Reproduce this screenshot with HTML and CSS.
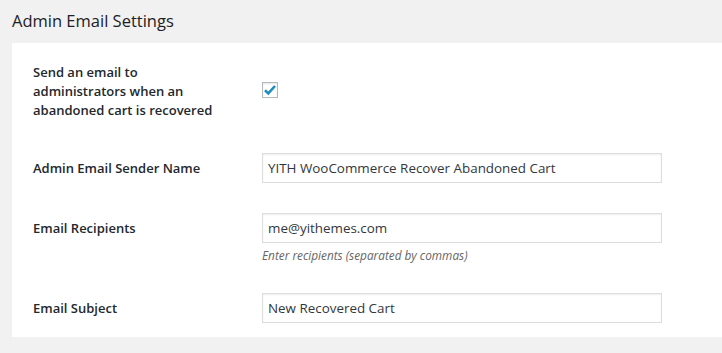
FILE: index.html
```
<!DOCTYPE html>
<html>
<head>
    <meta charset="UTF-8">
    <meta name="viewport" content="width=device-width, initial-scale=1.0">
    <title>Admin Email Settings</title>
    <link rel="stylesheet" href="styles.css">
</head>
<body>
    <h2 class="section-title">Admin Email Settings</h2>
    <div class="panel">
        <div class="row row-check">
            <div class="label">Send an email to administrators when an abandoned cart is recovered</div>
            <div class="field">
                <span class="checkbox">
                    <svg width="14" height="14" viewBox="0 0 14 14">
                        <path d="M2 7.2 L5.3 10.4 L12 3" fill="none" stroke="#1e8cbe" stroke-width="2.6" stroke-linecap="butt" stroke-linejoin="miter"/>
                    </svg>
                </span>
            </div>
        </div>
        <div class="row row-first">
            <div class="label">Admin Email Sender Name</div>
            <div class="field">
                <input type="text" value="YITH WooCommerce Recover Abandoned Cart">
            </div>
        </div>
        <div class="row">
            <div class="label">Email Recipients</div>
            <div class="field">
                <input type="text" value="me@yithemes.com">
                <p class="description">Enter recipients (separated by commas)</p>
            </div>
        </div>
        <div class="row row-last">
            <div class="label">Email Subject</div>
            <div class="field">
                <input type="text" value="New Recovered Cart">
            </div>
        </div>
    </div>
</body>
</html>
```
FILE: styles.css
```
body {
    margin: 0;
    background-color: #f1f1f1;
    font-family: "Open Sans", "Noto Sans", sans-serif;
    color: #23282d;
}

.section-title {
    margin: 0;
    padding: 9px 0 0 12px;
    height: 34px;
    font-size: 16.5px;
    font-weight: 400;
    line-height: 24px;
    color: #1d2125;
}

.panel {
    background-color: #fff;
    margin-left: 12px;
    padding: 20px 21px 14px;
}

.row {
    display: flex;
    align-items: flex-start;
    margin-top: 30px;
}

.row-check {
    margin-top: 0;
}

.row-first {
    margin-top: 33px;
}

.row-last {
    margin-top: 28px;
}

.label {
    width: 229px;
    flex-shrink: 0;
    font-size: 13px;
    font-weight: 600;
    line-height: 19px;
    margin-top: 6px;
}

.row-check .label {
    margin-top: 0;
    width: 190px;
    margin-right: 39px;
}

.row-check .field {
    padding-top: 19px;
}

.checkbox {
    display: flex;
    align-items: center;
    justify-content: center;
    width: 14px;
    height: 14px;
    border: 1px solid #b4b9be;
    box-shadow: inset 0 1px 2px rgba(0, 0, 0, .1);
    background: #fff;
}

input[type="text"] {
    box-sizing: border-box;
    display: block;
    width: 400px;
    height: 30px;
    margin: 0;
    padding: 0 5px;
    border: 1px solid #ddd;
    box-shadow: inset 0 1px 2px rgba(0, 0, 0, .07);
    font-family: "Open Sans", "Noto Sans", sans-serif;
    font-size: 13.4px;
    color: #32373c;
    background: #fff;
    outline: none;
}

.description {
    margin: 3px 0 0;
    font-size: 11.8px;
    font-style: italic;
    line-height: 19px;
    color: #666;
}
```
